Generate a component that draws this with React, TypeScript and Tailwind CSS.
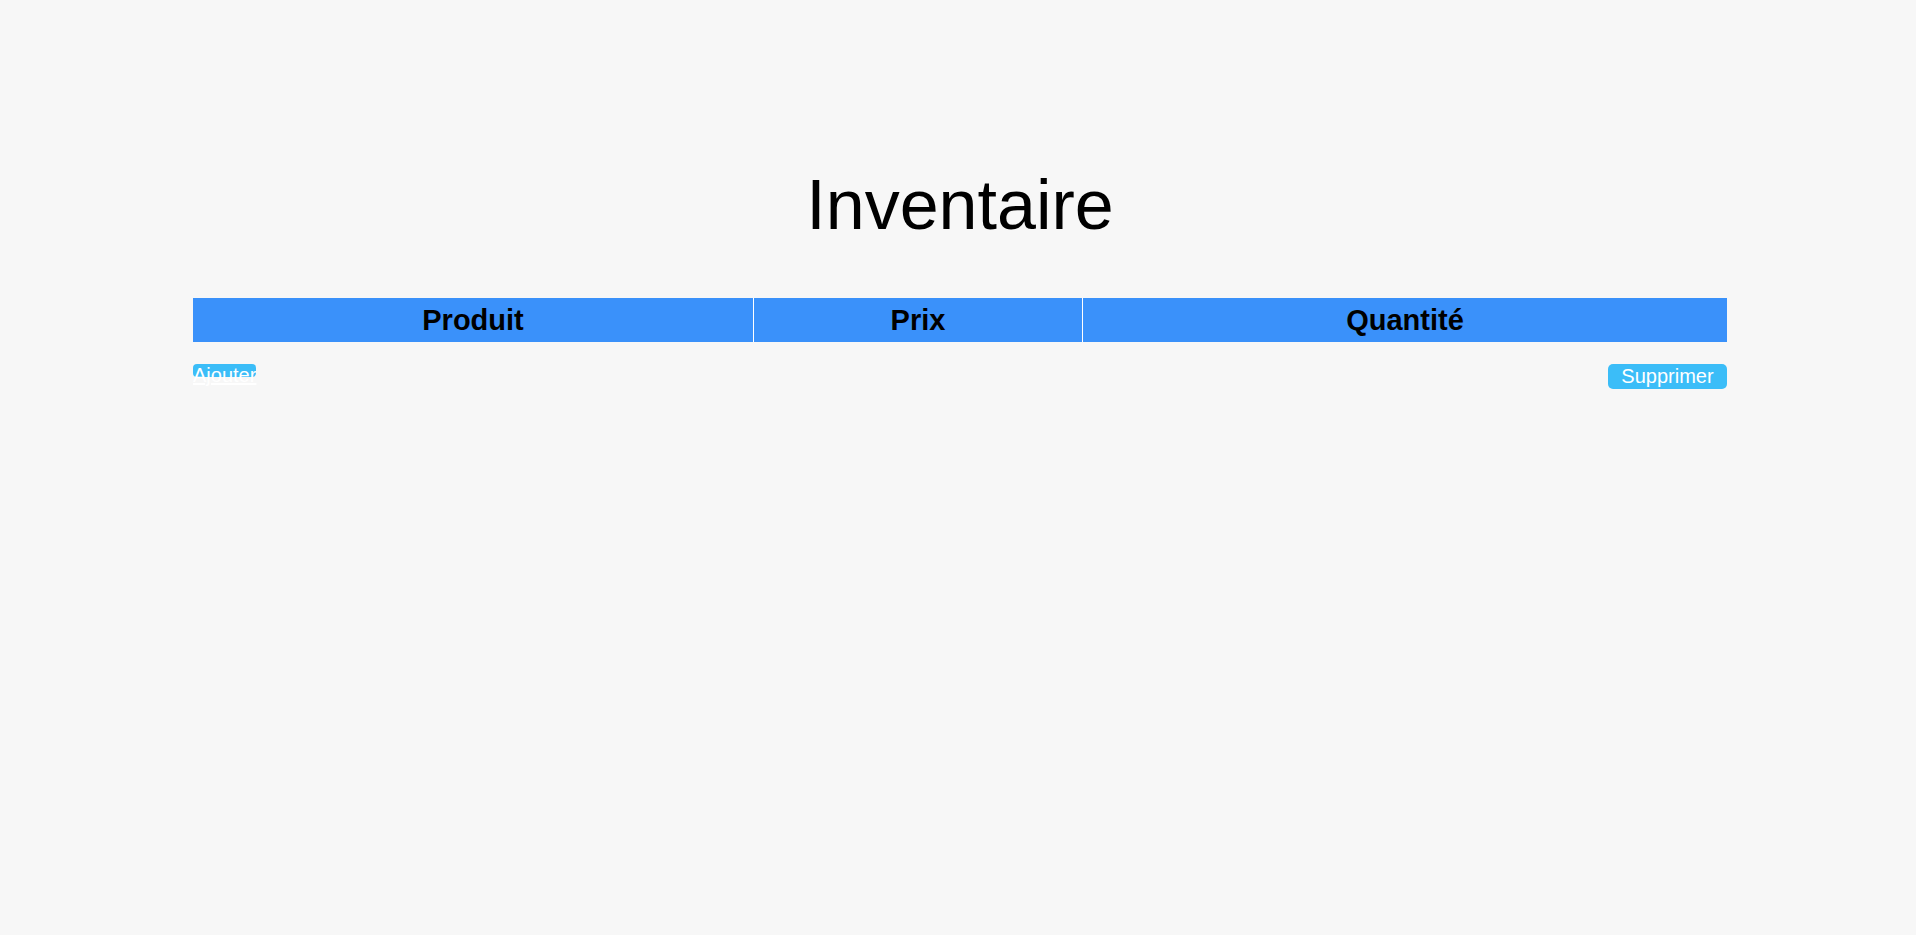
export default function App() {
  return (
    <div className="min-h-screen bg-[#f7f7f7] pl-[193px] pr-[189px] pt-[165px] font-['Liberation_Sans',Arial,sans-serif] text-black">
      <h1 className="text-center text-[70px] leading-[normal] font-normal">Inventaire</h1>

      <div className="mt-[53px] grid grid-cols-[560px_329px_645px] bg-[#3a91fa] text-[29px] font-bold">
        <div className="h-[44px] leading-[44px] text-center">Produit</div>
        <div className="h-[44px] leading-[44px] text-center border-l border-white">Prix</div>
        <div className="h-[44px] leading-[44px] text-center border-l border-white">Quantité</div>
      </div>

      <div className="mt-[22px] flex items-start justify-between text-[20px] leading-[normal] text-white">
        <div className="h-[13px] w-[63px] rounded-[4px] bg-[#3bbdf8] whitespace-nowrap">
          <a href="#" className="underline">
            Ajouter
          </a>
        </div>
        <button className="w-[119px] rounded-[5px] bg-[#3bbdf8] py-px text-center">
          Supprimer
        </button>
      </div>
    </div>
  );
}
